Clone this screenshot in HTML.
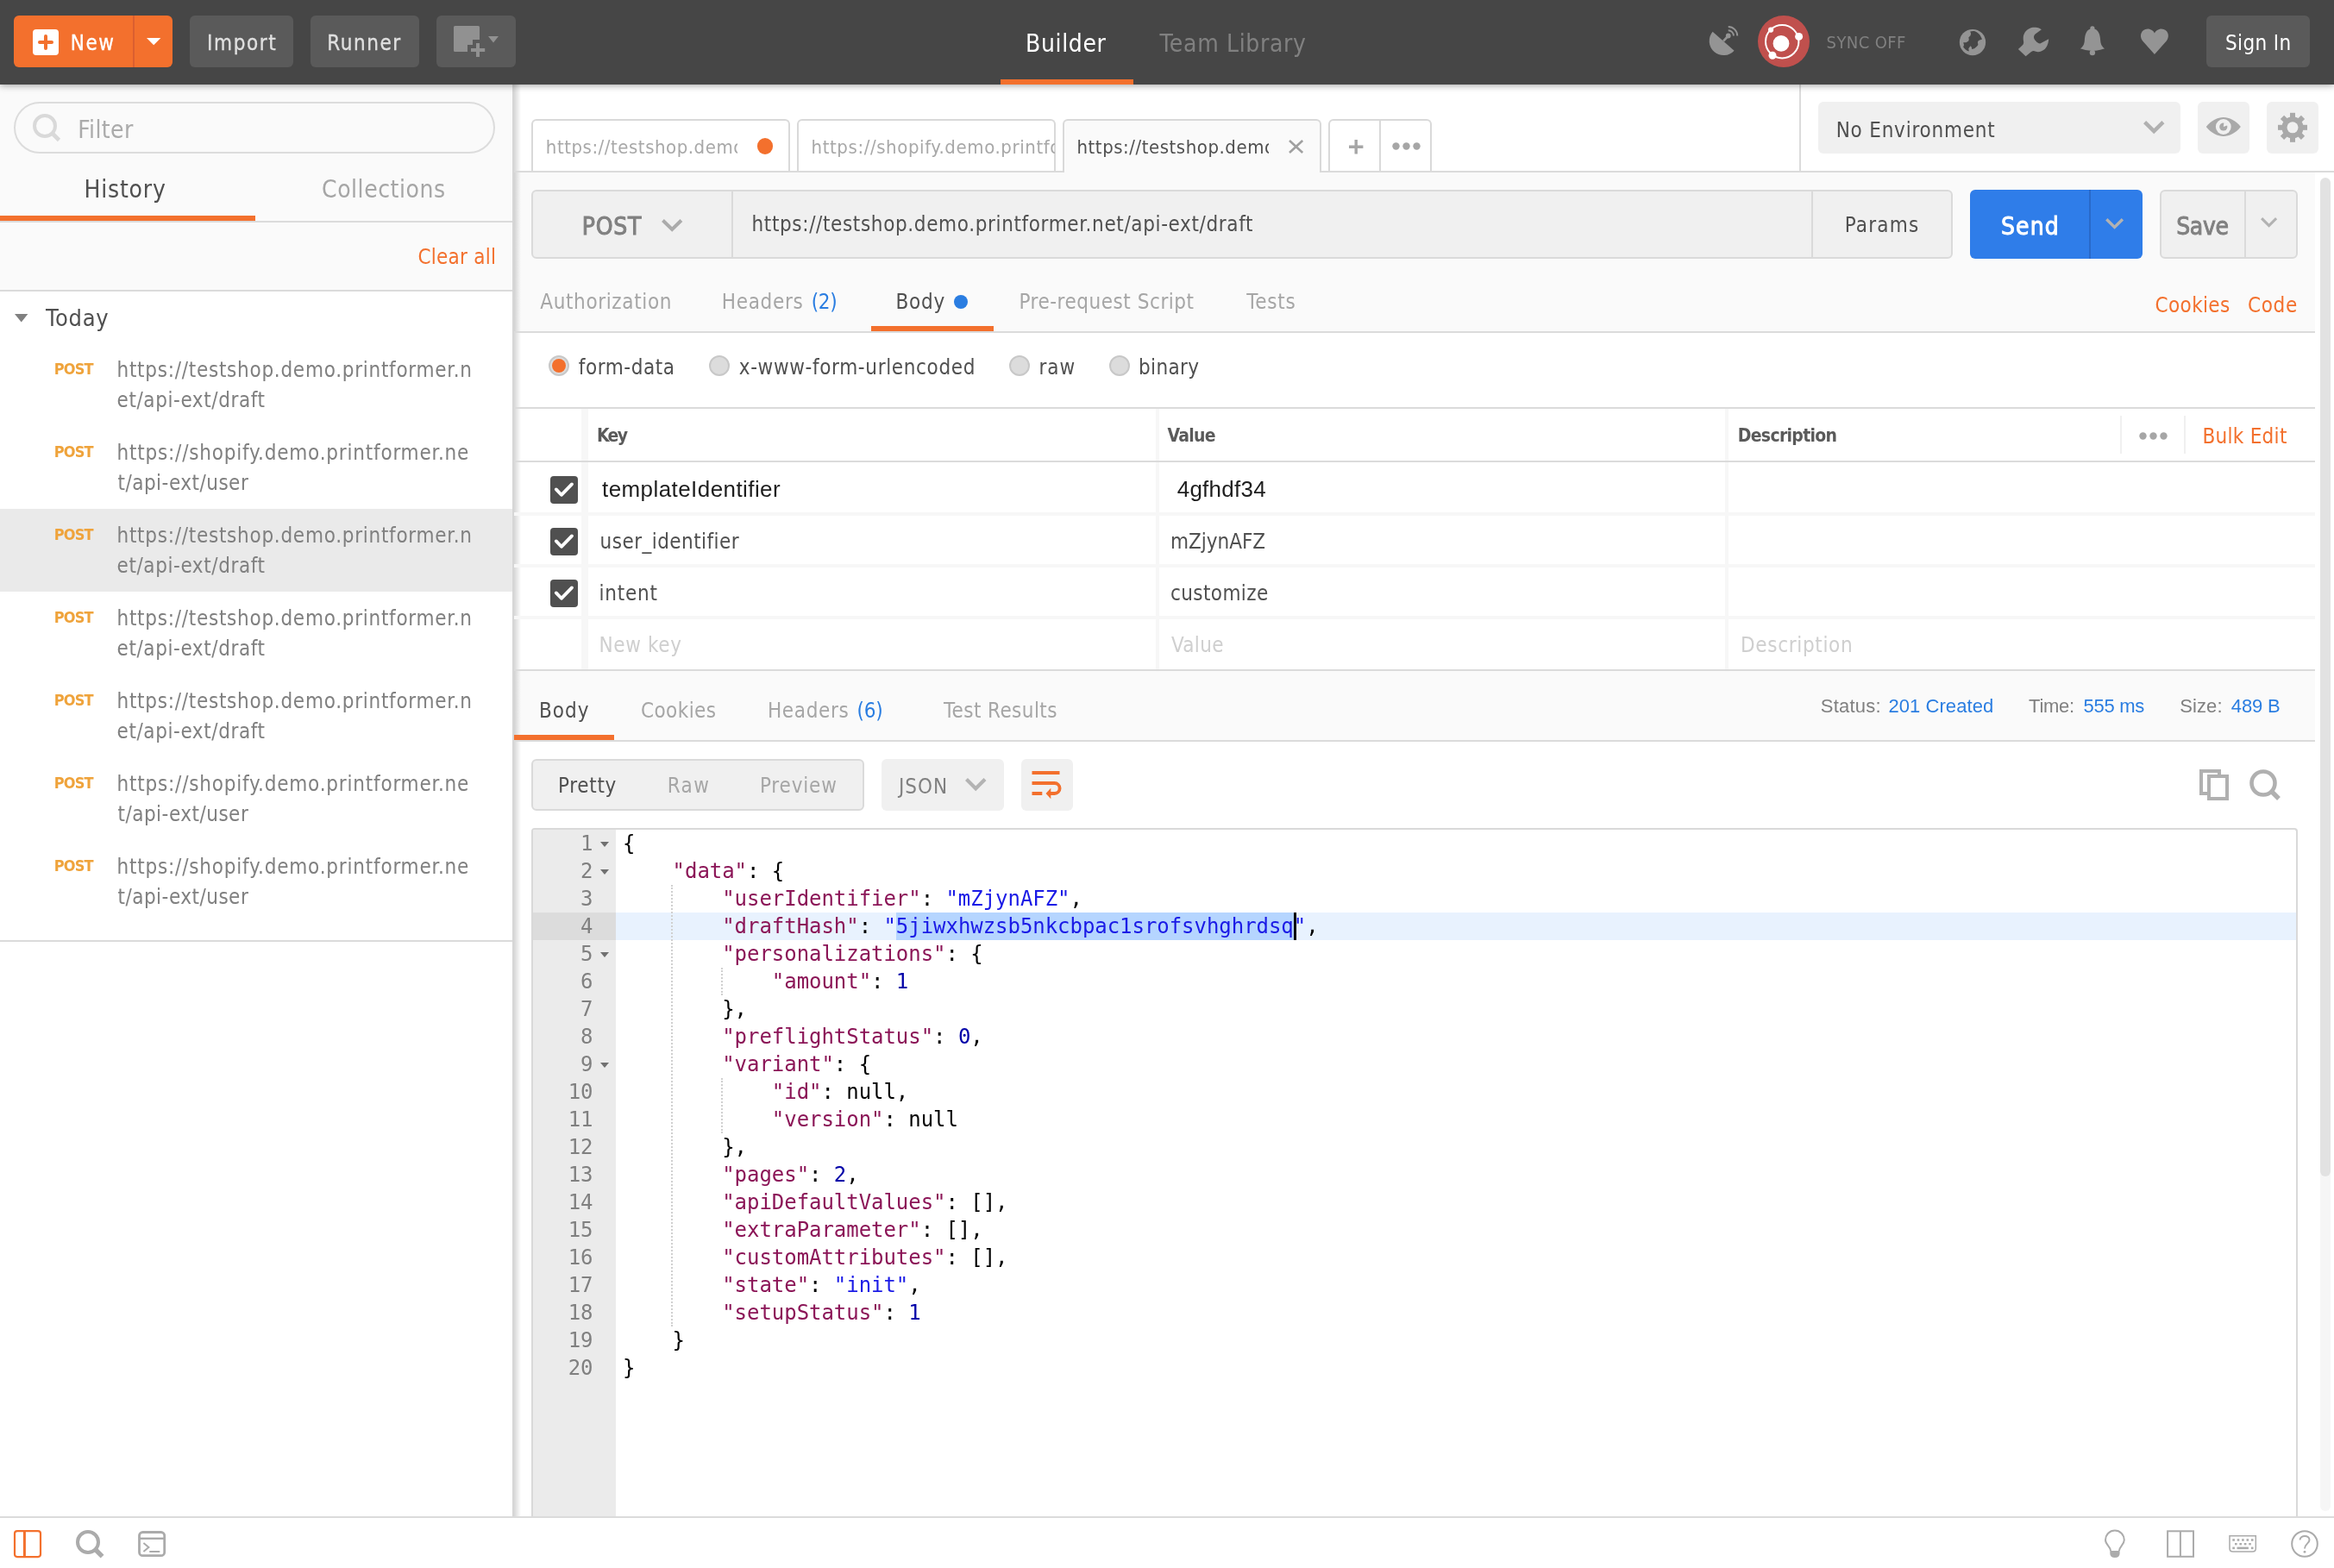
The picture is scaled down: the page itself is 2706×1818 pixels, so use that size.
<!DOCTYPE html>
<html lang="en"><head><meta charset="utf-8"><meta name="viewport" content="width=2706"><title>Postman</title>
<style>
html,body{margin:0;padding:0}
body{width:2706px;height:1818px;overflow:hidden;background:#fff;position:relative;font-family:'DejaVu Sans Condensed','Liberation Sans',sans-serif;}
#app{position:absolute;left:0;top:0;width:2706px;height:1818px;overflow:hidden;will-change:transform}
.a{position:absolute;box-sizing:border-box}
.t{position:absolute;white-space:nowrap;line-height:1}
svg{position:absolute;overflow:visible}
.code{margin:0;font-family:"DejaVu Sans Mono","Liberation Mono",monospace;font-size:24px;line-height:32px;white-space:pre;letter-spacing:-0.047px}
</style></head><body><div id="app">
<div class="a" style="left:0px;top:98px;width:594px;height:240px;background:#FAFAFA;"></div>
<div class="a" style="left:596px;top:200px;width:2088px;height:186px;background:#FAFAFA;"></div>
<div class="a" style="left:596px;top:778px;width:2088px;height:82px;background:#FAFAFA;"></div>
<div class="a" style="left:0px;top:0px;width:2706px;height:98px;background:#464646;box-shadow:0 1px 8px rgba(0,0,0,.38);z-index:5;"></div>
<div class="a" style="left:0;top:0;width:2706px;height:98px;z-index:6">
<div class="a" style="left:16px;top:18px;width:184px;height:60px;background:#F3702D;border-radius:6px;"></div>
<div class="a" style="left:154px;top:18px;width:2px;height:60px;background:#DB5F30;"></div>
<div class="a" style="left:38px;top:34px;width:30px;height:30px;background:#fff;border-radius:4px;"></div>
<div class="a" style="left:43.6px;top:46.6px;width:18.4px;height:4.6px;background:#F3702D;border-radius:2.3px;"></div>
<div class="a" style="left:50.5px;top:40.2px;width:4.6px;height:18px;background:#F3702D;border-radius:2.3px;"></div>
<span class="t" style="left:81.65px;top:38.00px;font-size:24px;color:#fff;letter-spacing:1.631px;-webkit-text-stroke:0.3px;">New</span>
<svg style="left:169.6px;top:43.75px" width="16.4" height="8.2"><path d="M0 0H16.4L8.2 8.2Z" fill="#fff"/></svg>
<div class="a" style="left:220px;top:18px;width:120px;height:60px;background:#5A5A5A;border-radius:6px;"></div>
<span class="t" style="left:240.05px;top:38.00px;font-size:24px;color:#E0E0E0;letter-spacing:1.622px;-webkit-text-stroke:0.3px;">Import</span>
<div class="a" style="left:360px;top:18px;width:126px;height:60px;background:#5A5A5A;border-radius:6px;"></div>
<span class="t" style="left:379.15px;top:38.00px;font-size:24px;color:#E0E0E0;letter-spacing:1.565px;-webkit-text-stroke:0.3px;">Runner</span>
<div class="a" style="left:506px;top:18px;width:92px;height:60px;background:#5A5A5A;border-radius:6px;"></div>
<svg style="left:0;top:0" width="700" height="98"><path d="M527.5 30H554.5Q556 30 556 31.5V46H548V52H542V60H527.5Q526 60 526 58.5V31.5Q526 30 527.5 30Z" fill="#919191"/><path d="M546 58H562.2M554 50V66" stroke="#919191" stroke-width="4" fill="none"/><path d="M566 42H578L572 49.6Z" fill="#919191"/></svg>
<span class="t" style="left:1189.10px;top:37.00px;font-size:28px;color:#fff;letter-spacing:0.625px;">Builder</span>
<span class="t" style="left:1344.60px;top:37.00px;font-size:28px;color:#808080;letter-spacing:0.658px;">Team Library</span>
<div class="a" style="left:1160px;top:92px;width:154px;height:6px;background:#F3702D;"></div>
<div class="a" style="left:2038px;top:18px;width:60px;height:60px;background:#C0504D;border-radius:30px;"></div>
<span class="t" style="left:2117.60px;top:39.00px;font-size:20px;color:#808080;letter-spacing:0.391px;">SYNC OFF</span>
<svg style="left:0;top:0" width="2706" height="98"><path d="M1985.61 36.77A16.6 16.6 0 0 0 2010.59 58.63Z" fill="#949494"/><path d="M1998.1 47.7L2003.75 41.5" stroke="#949494" stroke-width="2.6"/><circle cx="2003.75" cy="41.5" r="2.9" fill="#949494"/><path d="M2003.75 35.3A6.2 6.2 0 0 1 2009.95 41.5M2003.75 31A10.5 10.5 0 0 1 2014.25 41.5" stroke="#949494" stroke-width="1.9" fill="none"/><circle cx="2066.2" cy="48.2" r="19.2" fill="none" stroke="#fff" stroke-width="2"/><circle cx="2065" cy="50.4" r="9.4" fill="#fff"/><circle cx="2053.1" cy="34.6" r="3.1" fill="#fff"/><circle cx="2085.6" cy="42.4" r="4.5" fill="#fff"/><circle cx="2055" cy="64.2" r="4.5" fill="#fff"/><circle cx="2287" cy="49.05" r="15.15" fill="#949494"/><path d="M2284.2 36.5Q2286.5 35.8 2289 36Q2292 37 2294 39Q2295.8 40.8 2296.8 42.9L2298 45.4L2294.5 46.8Q2293 47.8 2292.9 49.1L2293.4 51.9L2292 53.8L2289 56.3L2286.2 56.9L2285.7 54.4L2284.5 53.2L2282.3 56.3L2282.8 59.6Q2280.5 58.8 2278.9 57.4Q2277.2 56 2276.2 54.4L2277 51.9L2276.2 49.3L2279.5 49.3L2282.3 47.4L2282.8 45.4L2282.3 43.5L2284.5 41.3L2285.1 39Z" fill="#464646"/><path d="M2366.9 34.3C2364 32.5 2362 31.8 2360.3 31.8C2357 31.5 2355 32 2354.1 32.4C2351 34 2349.5 35 2348.6 36.3C2347 38.5 2346 40.5 2345.8 42.4C2345.6 44.5 2345.8 46.5 2346.1 47.9C2346.3 49.5 2346 51 2345.2 51.9L2339.9 56.9L2348.6 65.2L2354.7 60.2C2355.8 59.4 2357 59.1 2358 59.1C2360 59.8 2361.5 60.3 2363 60.2C2365.5 60 2367.5 59.2 2369.2 58C2371.3 56.5 2372.8 54.5 2373.6 52.4C2374.6 50 2375.2 47.5 2375.2 45.2L2365.3 50.5C2363.3 50.3 2361.5 49 2360.3 47.4C2358.8 46 2358 44.5 2358 42.9C2358 41.3 2359 40 2360.3 39Z" fill="#949494"/><g transform="translate(2411.8 30.3)" fill="#949494"><circle cx="14.1" cy="2.6" r="2.6"/><path d="M14.1 3C7 3 5.4 10 5 17C4.6 22 2.5 24.5 0 26Q14.1 31.5 28.4 26C26 24.5 23.8 22 23.4 17C23 10 21.2 3 14.1 3Z"/><circle cx="14.1" cy="30.8" r="3.2"/></g><path transform="translate(2481.7 33.6)" d="M16.25 29.4L2.2 13.6C-1.8 8.6 0.6 0 8.2 0C12 0 15 2.4 16.25 5C17.5 2.4 20.5 0 24.3 0C31.9 0 34.3 8.6 30.3 13.6Z" fill="#949494"/></svg>
<div class="a" style="left:2558px;top:18px;width:120px;height:60px;background:#5A5A5A;border-radius:6px;"></div>
<span class="t" style="left:2580.00px;top:38.00px;font-size:24px;color:#fff;letter-spacing:0.362px;">Sign In</span>
</div>
<div class="a" style="left:16px;top:118px;width:558px;height:60px;background:#FAFAFA;border:2px solid #DCDCDC;border-radius:30px;"></div>
<svg style="left:37px;top:131px" width="36" height="36"><circle cx="15" cy="15" r="12" fill="none" stroke="#D9D9D9" stroke-width="4"/><path d="M23.5 23.5L31.5 31.5" stroke="#D9D9D9" stroke-width="4.6"/></svg>
<span class="t" style="left:90.25px;top:137.00px;font-size:28px;color:#ABABAB;letter-spacing:0.384px;">Filter</span>
<span class="t" style="left:97.40px;top:206.00px;font-size:28px;color:#505050;letter-spacing:0.816px;">History</span>
<span class="t" style="left:373.00px;top:206.00px;font-size:28px;color:#A6A6A6;letter-spacing:0.539px;">Collections</span>
<div class="a" style="left:0px;top:256px;width:594px;height:2px;background:#DBDBDB;"></div>
<div class="a" style="left:0px;top:250px;width:296px;height:6px;background:#F3702D;"></div>
<span class="t" style="left:484.40px;top:286.00px;font-size:24px;color:#F3702D;letter-spacing:0.255px;">Clear all</span>
<div class="a" style="left:0px;top:336px;width:594px;height:2px;background:#DBDBDB;"></div>
<svg style="left:16.6px;top:364.2px" width="15.4" height="9.6"><path d="M0 0H15.4L7.7 9.6Z" fill="#808080"/></svg>
<span class="t" style="left:53.00px;top:355.00px;font-size:27px;color:#505050;letter-spacing:0.722px;">Today</span>
<span class="t" style="left:62.80px;top:419.00px;font-size:18px;color:#EFA33B;font-weight:700;letter-spacing:-0.897px;">POST</span>
<span class="t" style="left:135.50px;top:417.00px;font-size:24px;color:#808080;letter-spacing:0.727px;">https://testshop.demo.printformer.n</span>
<span class="t" style="left:135.50px;top:452.00px;font-size:24px;color:#808080;letter-spacing:0.592px;">et/api-ext/draft</span>
<span class="t" style="left:62.80px;top:515.00px;font-size:18px;color:#EFA33B;font-weight:700;letter-spacing:-0.897px;">POST</span>
<span class="t" style="left:135.50px;top:513.00px;font-size:24px;color:#808080;letter-spacing:0.787px;">https://shopify.demo.printformer.ne</span>
<span class="t" style="left:136.50px;top:548.00px;font-size:24px;color:#808080;letter-spacing:0.486px;">t/api-ext/user</span>
<div class="a" style="left:0px;top:590px;width:594px;height:96px;background:#EAEAEA;"></div>
<span class="t" style="left:62.80px;top:611.00px;font-size:18px;color:#EFA33B;font-weight:700;letter-spacing:-0.897px;">POST</span>
<span class="t" style="left:135.50px;top:609.00px;font-size:24px;color:#808080;letter-spacing:0.727px;">https://testshop.demo.printformer.n</span>
<span class="t" style="left:135.50px;top:644.00px;font-size:24px;color:#808080;letter-spacing:0.592px;">et/api-ext/draft</span>
<span class="t" style="left:62.80px;top:707.00px;font-size:18px;color:#EFA33B;font-weight:700;letter-spacing:-0.897px;">POST</span>
<span class="t" style="left:135.50px;top:705.00px;font-size:24px;color:#808080;letter-spacing:0.727px;">https://testshop.demo.printformer.n</span>
<span class="t" style="left:135.50px;top:740.00px;font-size:24px;color:#808080;letter-spacing:0.592px;">et/api-ext/draft</span>
<span class="t" style="left:62.80px;top:803.00px;font-size:18px;color:#EFA33B;font-weight:700;letter-spacing:-0.897px;">POST</span>
<span class="t" style="left:135.50px;top:801.00px;font-size:24px;color:#808080;letter-spacing:0.727px;">https://testshop.demo.printformer.n</span>
<span class="t" style="left:135.50px;top:836.00px;font-size:24px;color:#808080;letter-spacing:0.592px;">et/api-ext/draft</span>
<span class="t" style="left:62.80px;top:899.00px;font-size:18px;color:#EFA33B;font-weight:700;letter-spacing:-0.897px;">POST</span>
<span class="t" style="left:135.50px;top:897.00px;font-size:24px;color:#808080;letter-spacing:0.787px;">https://shopify.demo.printformer.ne</span>
<span class="t" style="left:136.50px;top:932.00px;font-size:24px;color:#808080;letter-spacing:0.486px;">t/api-ext/user</span>
<span class="t" style="left:62.80px;top:995.00px;font-size:18px;color:#EFA33B;font-weight:700;letter-spacing:-0.897px;">POST</span>
<span class="t" style="left:135.50px;top:993.00px;font-size:24px;color:#808080;letter-spacing:0.787px;">https://shopify.demo.printformer.ne</span>
<span class="t" style="left:136.50px;top:1028.00px;font-size:24px;color:#808080;letter-spacing:0.486px;">t/api-ext/user</span>
<div class="a" style="left:0px;top:1090px;width:594px;height:2px;background:#DBDBDB;"></div>
<div class="a" style="left:594px;top:98px;width:2px;height:1660px;background:#D6D6D6;"></div>
<div class="a" style="left:596px;top:98px;width:8px;height:1660px;background:linear-gradient(90deg,rgba(0,0,0,.16),rgba(0,0,0,0));"></div>
<div class="a" style="left:616px;top:138px;width:300px;height:60px;background:#fff;border:2px solid #D9D9D9;border-bottom:none;border-radius:6px 6px 0 0;z-index:1;"></div>
<div class="a" style="left:924px;top:138px;width:300px;height:60px;background:#fff;border:2px solid #D9D9D9;border-bottom:none;border-radius:6px 6px 0 0;z-index:1;"></div>
<div class="a" style="left:596px;top:198px;width:2110px;height:2px;background:#DBDBDB;z-index:2;"></div>
<div class="a" style="left:1232px;top:138px;width:300px;height:62px;background:#FAFAFA;border:2px solid #D9D9D9;border-bottom:none;border-radius:6px 6px 0 0;z-index:3;"></div>
<div class="a" style="left:1540px;top:138px;width:120px;height:60px;background:#fff;border:2px solid #D9D9D9;border-bottom:none;border-radius:6px 6px 0 0;z-index:1;"></div>
<div class="a" style="left:1599px;top:140px;width:2px;height:58px;background:#D9D9D9;z-index:1;"></div>
<div class="a" style="left:631.8px;top:155.8px;width:223px;height:33.0px;overflow:hidden;z-index:4">
<span class="t" style="left:1.00px;top:4.00px;font-size:22px;color:#A8A8A8;letter-spacing:0.532px;">https://testshop.demo.printformer.net/api-ext/draft</span>
</div>
<div class="a" style="left:877.75px;top:160px;width:18.5px;height:18.5px;background:#F3702D;border-radius:50%;z-index:4;"></div>
<div class="a" style="left:939.5px;top:155.8px;width:283px;height:33.0px;overflow:hidden;z-index:4">
<span class="t" style="left:1.00px;top:4.00px;font-size:22px;color:#A8A8A8;letter-spacing:0.590px;">https://shopify.demo.printformer.net/api-ext/user</span>
</div>
<div class="a" style="left:1247.5px;top:155.8px;width:223px;height:33.0px;overflow:hidden;z-index:4">
<span class="t" style="left:1.00px;top:4.00px;font-size:22px;color:#505050;letter-spacing:0.532px;">https://testshop.demo.printformer.net/api-ext/draft</span>
</div>
<svg style="left:1494.4px;top:161.5px;z-index:4" width="17.2" height="16"><path d="M1 1L16.2 15M16.2 1L1 15" stroke="#A0A0A0" stroke-width="2.6" fill="none"/></svg>
<svg style="left:1563.8px;top:161.5px;z-index:4" width="16.4" height="16.4"><path d="M0 8.2H16.4M8.2 0V16.4" stroke="#A6A6A6" stroke-width="3.4" fill="none"/></svg>
<svg style="left:1613.5px;top:165px;z-index:4" width="33" height="9"><circle cx="4.5" cy="4.5" r="4.2" fill="#A6A6A6"/><circle cx="16.5" cy="4.5" r="4.2" fill="#A6A6A6"/><circle cx="28.5" cy="4.5" r="4.2" fill="#A6A6A6"/></svg>
<div class="a" style="left:2086px;top:98px;width:2px;height:100px;background:#DBDBDB;"></div>
<div class="a" style="left:2108px;top:118px;width:420px;height:60px;background:#F0F0F0;border-radius:6px;"></div>
<span class="t" style="left:2128.70px;top:139.00px;font-size:24px;color:#505050;letter-spacing:0.772px;">No Environment</span>
<svg style="left:2484.7px;top:140.4px" width="24.5" height="15"><path d="M1.6 1.6L12.25 12.1L22.9 1.6" stroke="#B0B0B0" stroke-width="4.4" fill="none"/></svg>
<div class="a" style="left:2548px;top:118px;width:60px;height:60px;background:#F0F0F0;border-radius:6px;"></div>
<div class="a" style="left:2628px;top:118px;width:60px;height:60px;background:#F0F0F0;border-radius:6px;"></div>
<svg style="left:2548px;top:118px" width="60" height="60"><path d="M9.8 29C16 21.5 23 18 29.8 18C36.6 18 43.6 21.5 49.9 29C43.6 36.5 36.6 40 29.8 40C23 40 16 36.5 9.8 29Z" fill="#A9A9A9"/><circle cx="29.8" cy="29" r="8.9" fill="#F0F0F0"/><circle cx="29.8" cy="29" r="4.6" fill="#A9A9A9"/><path d="M29.8 29L30.5 23.5L35.5 27Z" fill="#F0F0F0"/></svg>
<svg style="left:2628px;top:118px" width="60" height="60"><g transform="translate(30 29.8)" fill="#A9A9A9"><rect x="-3" y="-17" width="6" height="8" transform="rotate(0)"/><rect x="-3" y="-17" width="6" height="8" transform="rotate(45)"/><rect x="-3" y="-17" width="6" height="8" transform="rotate(90)"/><rect x="-3" y="-17" width="6" height="8" transform="rotate(135)"/><rect x="-3" y="-17" width="6" height="8" transform="rotate(180)"/><rect x="-3" y="-17" width="6" height="8" transform="rotate(225)"/><rect x="-3" y="-17" width="6" height="8" transform="rotate(270)"/><rect x="-3" y="-17" width="6" height="8" transform="rotate(315)"/><circle r="12.6"/><circle r="6.5" fill="#F0F0F0"/></g></svg>
<div class="a" style="left:616px;top:220px;width:1648px;height:80px;background:#F0F0F0;border:2px solid #DADADA;border-radius:6px;"></div>
<div class="a" style="left:848px;top:222px;width:2px;height:76px;background:#DADADA;"></div>
<div class="a" style="left:2100px;top:222px;width:2px;height:76px;background:#DADADA;"></div>
<span class="t" style="left:674.80px;top:249.00px;font-size:28px;color:#808080;letter-spacing:0.697px;-webkit-text-stroke:1.0px;">POST</span>
<svg style="left:767px;top:253.5px" width="24.4" height="14"><path d="M1.5 1.5L12.2 12L22.9 1.5" stroke="#ABABAB" stroke-width="4" fill="none"/></svg>
<span class="t" style="left:871.50px;top:248.00px;font-size:24px;color:#505050;letter-spacing:0.632px;">https://testshop.demo.printformer.net/api-ext/draft</span>
<span class="t" style="left:2138.70px;top:249.00px;font-size:24px;color:#505050;letter-spacing:1.198px;">Params</span>
<div class="a" style="left:2284px;top:220px;width:200px;height:80px;background:#2F7DE9;border-radius:6px;"></div>
<div class="a" style="left:2422px;top:220px;width:2px;height:80px;background:#2969C9;"></div>
<span class="t" style="left:2320.05px;top:249.00px;font-size:28px;color:#fff;letter-spacing:1.077px;-webkit-text-stroke:0.9px;">Send</span>
<svg style="left:2441.3px;top:252.6px" width="21.2" height="12.4"><path d="M1.3 1.3L10.6 10.4L19.9 1.3" stroke="#B2B2B2" stroke-width="3.4" fill="none"/></svg>
<div class="a" style="left:2504px;top:220px;width:160px;height:80px;background:#F0F0F0;border:2px solid #DADADA;border-radius:6px;"></div>
<div class="a" style="left:2602px;top:222px;width:2px;height:76px;background:#DADADA;"></div>
<span class="t" style="left:2523.15px;top:249.00px;font-size:28px;color:#808080;letter-spacing:-0.311px;-webkit-text-stroke:0.9px;">Save</span>
<svg style="left:2621.3px;top:252.2px" width="19.2" height="11.8"><path d="M1.1 1.1L9.6 9.6L18.1 1.1" stroke="#B2B2B2" stroke-width="3" fill="none"/></svg>
<span class="t" style="left:626.25px;top:338.00px;font-size:24px;color:#A6A6A6;letter-spacing:0.632px;">Authorization</span>
<span class="t" style="left:836.75px;top:338.00px;font-size:24px;color:#A6A6A6;letter-spacing:0.686px;">Headers</span>
<span class="t" style="left:940.75px;top:338.00px;font-size:24px;color:#2A7DE1;letter-spacing:-0.330px;">(2)</span>
<span class="t" style="left:1038.50px;top:338.00px;font-size:24px;color:#505050;letter-spacing:0.757px;">Body</span>
<div class="a" style="left:1105.75px;top:341.75px;width:16px;height:16px;background:#2A7DE1;border-radius:50%;"></div>
<span class="t" style="left:1181.40px;top:338.00px;font-size:24px;color:#A6A6A6;letter-spacing:0.537px;">Pre-request Script</span>
<span class="t" style="left:1445.30px;top:338.00px;font-size:24px;color:#A6A6A6;letter-spacing:0.749px;">Tests</span>
<span class="t" style="left:2498.60px;top:342.00px;font-size:24px;color:#F3702D;letter-spacing:0.352px;">Cookies</span>
<span class="t" style="left:2605.90px;top:342.00px;font-size:24px;color:#F3702D;letter-spacing:0.700px;">Code</span>
<div class="a" style="left:596px;top:384px;width:2088px;height:2px;background:#DBDBDB;"></div>
<div class="a" style="left:1010px;top:378px;width:142px;height:6px;background:#F3702D;"></div>
<div class="a" style="left:636px;top:412px;width:24px;height:24px;background:#DCDCDC;border:2px solid #C8C8C8;border-radius:50%;"></div>
<div class="a" style="left:640px;top:416px;width:16px;height:16px;background:#F3702D;border-radius:50%;"></div>
<span class="t" style="left:670.75px;top:414.00px;font-size:24px;color:#505050;letter-spacing:0.565px;">form-data</span>
<div class="a" style="left:822px;top:412px;width:24px;height:24px;background:#DCDCDC;border:2px solid #C8C8C8;border-radius:50%;"></div>
<span class="t" style="left:856.75px;top:414.00px;font-size:24px;color:#505050;letter-spacing:0.648px;">x-www-form-urlencoded</span>
<div class="a" style="left:1170px;top:412px;width:24px;height:24px;background:#DCDCDC;border:2px solid #C8C8C8;border-radius:50%;"></div>
<span class="t" style="left:1204.40px;top:414.00px;font-size:24px;color:#505050;letter-spacing:0.949px;">raw</span>
<div class="a" style="left:1286px;top:412px;width:24px;height:24px;background:#DCDCDC;border:2px solid #C8C8C8;border-radius:50%;"></div>
<span class="t" style="left:1320.00px;top:414.00px;font-size:24px;color:#505050;letter-spacing:0.360px;">binary</span>
<div class="a" style="left:596px;top:472px;width:2088px;height:2px;background:#DBDBDB;"></div>
<div class="a" style="left:596px;top:534px;width:2088px;height:2px;background:#DBDBDB;"></div>
<div class="a" style="left:596px;top:776px;width:2088px;height:2px;background:#DBDBDB;"></div>
<div class="a" style="left:596px;top:594px;width:2088px;height:4px;background:#F7F7F7;"></div>
<div class="a" style="left:596px;top:654px;width:2088px;height:4px;background:#F7F7F7;"></div>
<div class="a" style="left:596px;top:714px;width:2088px;height:4px;background:#F7F7F7;"></div>
<div class="a" style="left:674px;top:474px;width:8px;height:302px;background:#F7F7F7;"></div>
<div class="a" style="left:1340px;top:474px;width:4px;height:302px;background:#F7F7F7;"></div>
<div class="a" style="left:2000px;top:474px;width:4px;height:302px;background:#F7F7F7;"></div>
<div class="a" style="left:596px;top:534px;width:2088px;height:2px;background:#DBDBDB;"></div>
<span class="t" style="left:692.00px;top:495.00px;font-size:21px;color:#5A5A5A;font-weight:700;letter-spacing:-1.695px;">Key</span>
<span class="t" style="left:1353.40px;top:495.00px;font-size:21px;color:#5A5A5A;font-weight:700;letter-spacing:-0.686px;">Value</span>
<span class="t" style="left:2014.70px;top:495.00px;font-size:21px;color:#5A5A5A;font-weight:700;letter-spacing:-0.685px;">Description</span>
<div class="a" style="left:2458px;top:482px;width:2px;height:44px;background:#F0F0F0;"></div>
<div class="a" style="left:2532px;top:482px;width:2px;height:44px;background:#F0F0F0;"></div>
<svg style="left:2479.5px;top:501px" width="33" height="9"><circle cx="4.5" cy="4.5" r="4.2" fill="#A6A6A6"/><circle cx="16.5" cy="4.5" r="4.2" fill="#A6A6A6"/><circle cx="28.5" cy="4.5" r="4.2" fill="#A6A6A6"/></svg>
<span class="t" style="left:2553.40px;top:494.00px;font-size:24px;color:#F3702D;letter-spacing:0.286px;">Bulk Edit</span>
<div class="a" style="left:638px;top:552px;width:32px;height:32px;background:#505050;border-radius:4px;"></div>
<svg style="left:638px;top:552px" width="32" height="32"><path d="M6.8 15.4L12.9 21.8L25 9.4" stroke="#fff" stroke-width="3.8" fill="none" stroke-linecap="round" stroke-linejoin="round"/></svg>
<div class="a" style="left:638px;top:612px;width:32px;height:32px;background:#505050;border-radius:4px;"></div>
<svg style="left:638px;top:612px" width="32" height="32"><path d="M6.8 15.4L12.9 21.8L25 9.4" stroke="#fff" stroke-width="3.8" fill="none" stroke-linecap="round" stroke-linejoin="round"/></svg>
<div class="a" style="left:638px;top:672px;width:32px;height:32px;background:#505050;border-radius:4px;"></div>
<svg style="left:638px;top:672px" width="32" height="32"><path d="M6.8 15.4L12.9 21.8L25 9.4" stroke="#fff" stroke-width="3.8" fill="none" stroke-linecap="round" stroke-linejoin="round"/></svg>
<span class="t" style="left:698.00px;top:554.00px;font-size:26px;color:#1E1E1E;font-family:'Liberation Sans','DejaVu Sans',sans-serif;letter-spacing:0.424px;">templateIdentifier</span>
<span class="t" style="left:1364.70px;top:554.00px;font-size:26px;color:#1E1E1E;font-family:'Liberation Sans','DejaVu Sans',sans-serif;letter-spacing:0.250px;">4gfhdf34</span>
<span class="t" style="left:695.60px;top:616.00px;font-size:24px;color:#505050;letter-spacing:0.448px;">user_identifier</span>
<span class="t" style="left:1356.90px;top:616.00px;font-size:24px;color:#505050;letter-spacing:-0.010px;">mZjynAFZ</span>
<span class="t" style="left:694.60px;top:676.00px;font-size:24px;color:#505050;letter-spacing:0.735px;">intent</span>
<span class="t" style="left:1356.90px;top:676.00px;font-size:24px;color:#505050;letter-spacing:0.407px;">customize</span>
<span class="t" style="left:694.60px;top:736.00px;font-size:24px;color:#CFCFCF;letter-spacing:0.618px;">New key</span>
<span class="t" style="left:1357.90px;top:736.00px;font-size:24px;color:#CFCFCF;letter-spacing:0.370px;">Value</span>
<span class="t" style="left:2018.00px;top:736.00px;font-size:24px;color:#CFCFCF;letter-spacing:0.671px;">Description</span>
<span class="t" style="left:624.90px;top:812.00px;font-size:24px;color:#505050;letter-spacing:1.023px;">Body</span>
<span class="t" style="left:742.90px;top:812.00px;font-size:24px;color:#A6A6A6;letter-spacing:0.435px;">Cookies</span>
<span class="t" style="left:889.90px;top:812.00px;font-size:24px;color:#A6A6A6;letter-spacing:0.678px;">Headers</span>
<span class="t" style="left:993.40px;top:812.00px;font-size:24px;color:#2A7DE1;letter-spacing:-0.130px;">(6)</span>
<span class="t" style="left:1094.00px;top:812.00px;font-size:24px;color:#A6A6A6;letter-spacing:0.421px;">Test Results</span>
<div class="a" style="left:596px;top:858px;width:2088px;height:2px;background:#DBDBDB;"></div>
<div class="a" style="left:596px;top:852px;width:116px;height:6px;background:#F3702D;"></div>
<span class="t" style="left:2110.80px;top:808.00px;font-size:22px;color:#808080;font-family:'Liberation Sans','DejaVu Sans',sans-serif;letter-spacing:0.205px;">Status:</span>
<span class="t" style="left:2189.40px;top:808.00px;font-size:22px;color:#2A7DE1;font-family:'Liberation Sans','DejaVu Sans',sans-serif;letter-spacing:0.075px;">201 Created</span>
<span class="t" style="left:2352.00px;top:808.00px;font-size:22px;color:#808080;font-family:'Liberation Sans','DejaVu Sans',sans-serif;letter-spacing:-0.243px;">Time:</span>
<span class="t" style="left:2415.50px;top:808.00px;font-size:22px;color:#2A7DE1;font-family:'Liberation Sans','DejaVu Sans',sans-serif;letter-spacing:-0.269px;">555 ms</span>
<span class="t" style="left:2527.30px;top:808.00px;font-size:22px;color:#808080;font-family:'Liberation Sans','DejaVu Sans',sans-serif;letter-spacing:0.076px;">Size:</span>
<span class="t" style="left:2586.80px;top:808.00px;font-size:22px;color:#2A7DE1;font-family:'Liberation Sans','DejaVu Sans',sans-serif;letter-spacing:-0.155px;">489 B</span>
<div class="a" style="left:616px;top:880px;width:386px;height:60px;background:#F0F0F0;border:2px solid #DADADA;border-radius:6px;"></div>
<span class="t" style="left:646.90px;top:899.00px;font-size:24px;color:#505050;letter-spacing:0.710px;">Pretty</span>
<span class="t" style="left:773.80px;top:899.00px;font-size:24px;color:#A6A6A6;letter-spacing:1.348px;">Raw</span>
<span class="t" style="left:880.90px;top:899.00px;font-size:24px;color:#A6A6A6;letter-spacing:0.835px;">Preview</span>
<div class="a" style="left:1022px;top:880px;width:142px;height:60px;background:#F0F0F0;border-radius:6px;"></div>
<span class="t" style="left:1041.90px;top:900.00px;font-size:24px;color:#808080;letter-spacing:1.011px;">JSON</span>
<svg style="left:1118.6px;top:902.3px" width="24.5" height="15"><path d="M1.5 1.6L12.25 12.2L23 1.6" stroke="#B3B3B3" stroke-width="4.2" fill="none"/></svg>
<div class="a" style="left:1184px;top:880px;width:60px;height:60px;background:#F0F0F0;border-radius:6px;"></div>
<svg style="left:1195.5px;top:893.7px" width="34.2" height="31.5"><path d="M0.5 2H32.5M0.5 14H26.6a6 6 0 0 1 0 12H20M0.5 26H12.3" stroke="#F3702D" stroke-width="3.8" fill="none"/><path d="M22.3 19.8L16.5 26L22.3 32.2Z" fill="#F3702D"/></svg>
<svg style="left:2549.8px;top:892.1px" width="34.2" height="36"><path d="M9 28H2V2H23V7" stroke="#B0B0B0" stroke-width="4" fill="none"/><rect x="11" y="8" width="21" height="26" stroke="#B0B0B0" stroke-width="4" fill="none"/></svg>
<svg style="left:2607.7px;top:892.1px" width="36" height="36"><circle cx="16" cy="16" r="13.5" fill="none" stroke="#B0B0B0" stroke-width="4.6"/><path d="M25.5 25.5L34 34" stroke="#B0B0B0" stroke-width="5.4"/></svg>
<div class="a" style="left:616px;top:960px;width:2048px;height:800px;background:#fff;border:2px solid #D9D9D9;border-bottom:none;border-radius:4px 4px 0 0;"></div>
<div class="a" style="left:618px;top:962px;width:96px;height:796px;background:#EBEBEB;border-radius:2px 0 0 0;"></div>
<div class="a" style="left:618px;top:1058px;width:96px;height:32px;background:#DCDCDC;"></div>
<div class="a" style="left:714px;top:1058px;width:1948px;height:32px;background:#E8F2FE;"></div>
<div class="a" style="left:1038.8px;top:1058px;width:461.2px;height:32px;background:#B5D5FF;"></div>
<div class="a" style="left:1500.2px;top:1058px;width:3px;height:32px;background:#000;"></div>
<div class="a" style="left:778px;top:1026px;width:0px;height:512px;border-left:2px dotted #D0D0D0;"></div>
<div class="a" style="left:836px;top:1122px;width:0px;height:32px;border-left:2px dotted #D0D0D0;"></div>
<div class="a" style="left:836px;top:1250px;width:0px;height:64px;border-left:2px dotted #D0D0D0;"></div>
<pre class="a code" style="left:722px;top:962px;color:#000">{
    <span style="color:#8B1557">"data"</span>: {
        <span style="color:#8B1557">"userIdentifier"</span>: <span style="color:#1A1AE6">"mZjynAFZ"</span>,
        <span style="color:#8B1557">"draftHash"</span>: <span style="color:#1A1AE6">"5jiwxhwzsb5nkcbpac1srofsvhghrdsq"</span>,
        <span style="color:#8B1557">"personalizations"</span>: {
            <span style="color:#8B1557">"amount"</span>: <span style="color:#0000A8">1</span>
        },
        <span style="color:#8B1557">"preflightStatus"</span>: <span style="color:#0000A8">0</span>,
        <span style="color:#8B1557">"variant"</span>: {
            <span style="color:#8B1557">"id"</span>: null,
            <span style="color:#8B1557">"version"</span>: null
        },
        <span style="color:#8B1557">"pages"</span>: <span style="color:#0000A8">2</span>,
        <span style="color:#8B1557">"apiDefaultValues"</span>: [],
        <span style="color:#8B1557">"extraParameter"</span>: [],
        <span style="color:#8B1557">"customAttributes"</span>: [],
        <span style="color:#8B1557">"state"</span>: <span style="color:#1A1AE6">"init"</span>,
        <span style="color:#8B1557">"setupStatus"</span>: <span style="color:#0000A8">1</span>
    }
}</pre>
<pre class="a code" style="left:618px;top:962px;width:69.5px;text-align:right;color:#808080">1
2
3
4
5
6
7
8
9
10
11
12
13
14
15
16
17
18
19
20</pre>
<svg style="left:696px;top:976px" width="10" height="6"><path d="M0 0H10L5 6Z" fill="#707070"/></svg>
<svg style="left:696px;top:1008px" width="10" height="6"><path d="M0 0H10L5 6Z" fill="#707070"/></svg>
<svg style="left:696px;top:1104px" width="10" height="6"><path d="M0 0H10L5 6Z" fill="#707070"/></svg>
<svg style="left:696px;top:1232px" width="10" height="6"><path d="M0 0H10L5 6Z" fill="#707070"/></svg>
<div class="a" style="left:2690px;top:1352px;width:12px;height:400px;background:#F6F6F6;border-radius:0 0 6px 6px;"></div>
<div class="a" style="left:2690px;top:206px;width:12px;height:1158px;background:#E2E2E2;border-radius:6px;"></div>
<div class="a" style="left:0px;top:1758px;width:2706px;height:60px;background:#fff;border-top:2px solid #DBDBDB;z-index:4;"></div>
<svg style="left:0;top:1760px;z-index:5" width="2706" height="58"><rect x="17" y="15.1" width="30" height="30" rx="3" fill="none" stroke="#F3702D" stroke-width="2.2"/><path d="M28.4 15V45" stroke="#F3702D" stroke-width="3"/><circle cx="102" cy="28" r="12" fill="none" stroke="#ABABAB" stroke-width="4"/><path d="M110.5 36.5L118.6 44.6" stroke="#ABABAB" stroke-width="5.4"/><rect x="161.5" y="16.5" width="29.2" height="27.2" rx="4" fill="none" stroke="#ABABAB" stroke-width="2.8"/><path d="M161 23.8H191" stroke="#ABABAB" stroke-width="2.4"/><path d="M166.4 29.1L172.4 34.1L166.4 39.1" stroke="#ABABAB" stroke-width="2" fill="none"/><path d="M174 39H184.5" stroke="#ABABAB" stroke-width="2" stroke-linecap="round"/><path d="M2447 38C2447 33 2441 31 2441 25.5A10.9 10.9 0 0 1 2462.8 25.5C2462.8 31 2457 33 2457 38" fill="none" stroke="#ABABAB" stroke-width="2"/><path d="M2446.3 38H2457.6V41Q2457.6 46 2452 46Q2446.3 46 2446.3 41Z" fill="#ABABAB"/><rect x="2513.1" y="15.3" width="29.9" height="29.5" fill="none" stroke="#ABABAB" stroke-width="2"/><path d="M2527.9 15V45" stroke="#ABABAB" stroke-width="2"/><path d="M2585 20.8H2615.3V35.5Q2615.3 39 2611.5 39H2588.8Q2585 39 2585 35.5Z" fill="none" stroke="#ABABAB" stroke-width="1.5"/><rect x="2588.3" y="24.2" width="2.6" height="2.6" fill="#ABABAB"/><rect x="2593.7" y="24.2" width="2.6" height="2.6" fill="#ABABAB"/><rect x="2599.1" y="24.2" width="2.6" height="2.6" fill="#ABABAB"/><rect x="2604.5" y="24.2" width="2.6" height="2.6" fill="#ABABAB"/><rect x="2609.9" y="24.2" width="2.6" height="2.6" fill="#ABABAB"/><rect x="2591.0" y="29" width="2.6" height="2.4" fill="#ABABAB"/><rect x="2596.4" y="29" width="2.6" height="2.4" fill="#ABABAB"/><rect x="2601.8" y="29" width="2.6" height="2.4" fill="#ABABAB"/><rect x="2607.2" y="29" width="2.6" height="2.4" fill="#ABABAB"/><rect x="2588.3" y="33.6" width="2.6" height="2.6" fill="#ABABAB"/><rect x="2593.5" y="33.6" width="13.4" height="2.6" fill="#ABABAB"/><rect x="2609.9" y="33.6" width="2.6" height="2.6" fill="#ABABAB"/><circle cx="2672" cy="30" r="14.8" fill="none" stroke="#ABABAB" stroke-width="2"/><path d="M2666.5 25.5C2667 19.5 2677.5 19.5 2677.5 25.5C2677.5 29.5 2672 30 2672 35.5" fill="none" stroke="#ABABAB" stroke-width="2"/><circle cx="2672" cy="39.3" r="1.4" fill="#ABABAB"/></svg>
</div></body></html>
